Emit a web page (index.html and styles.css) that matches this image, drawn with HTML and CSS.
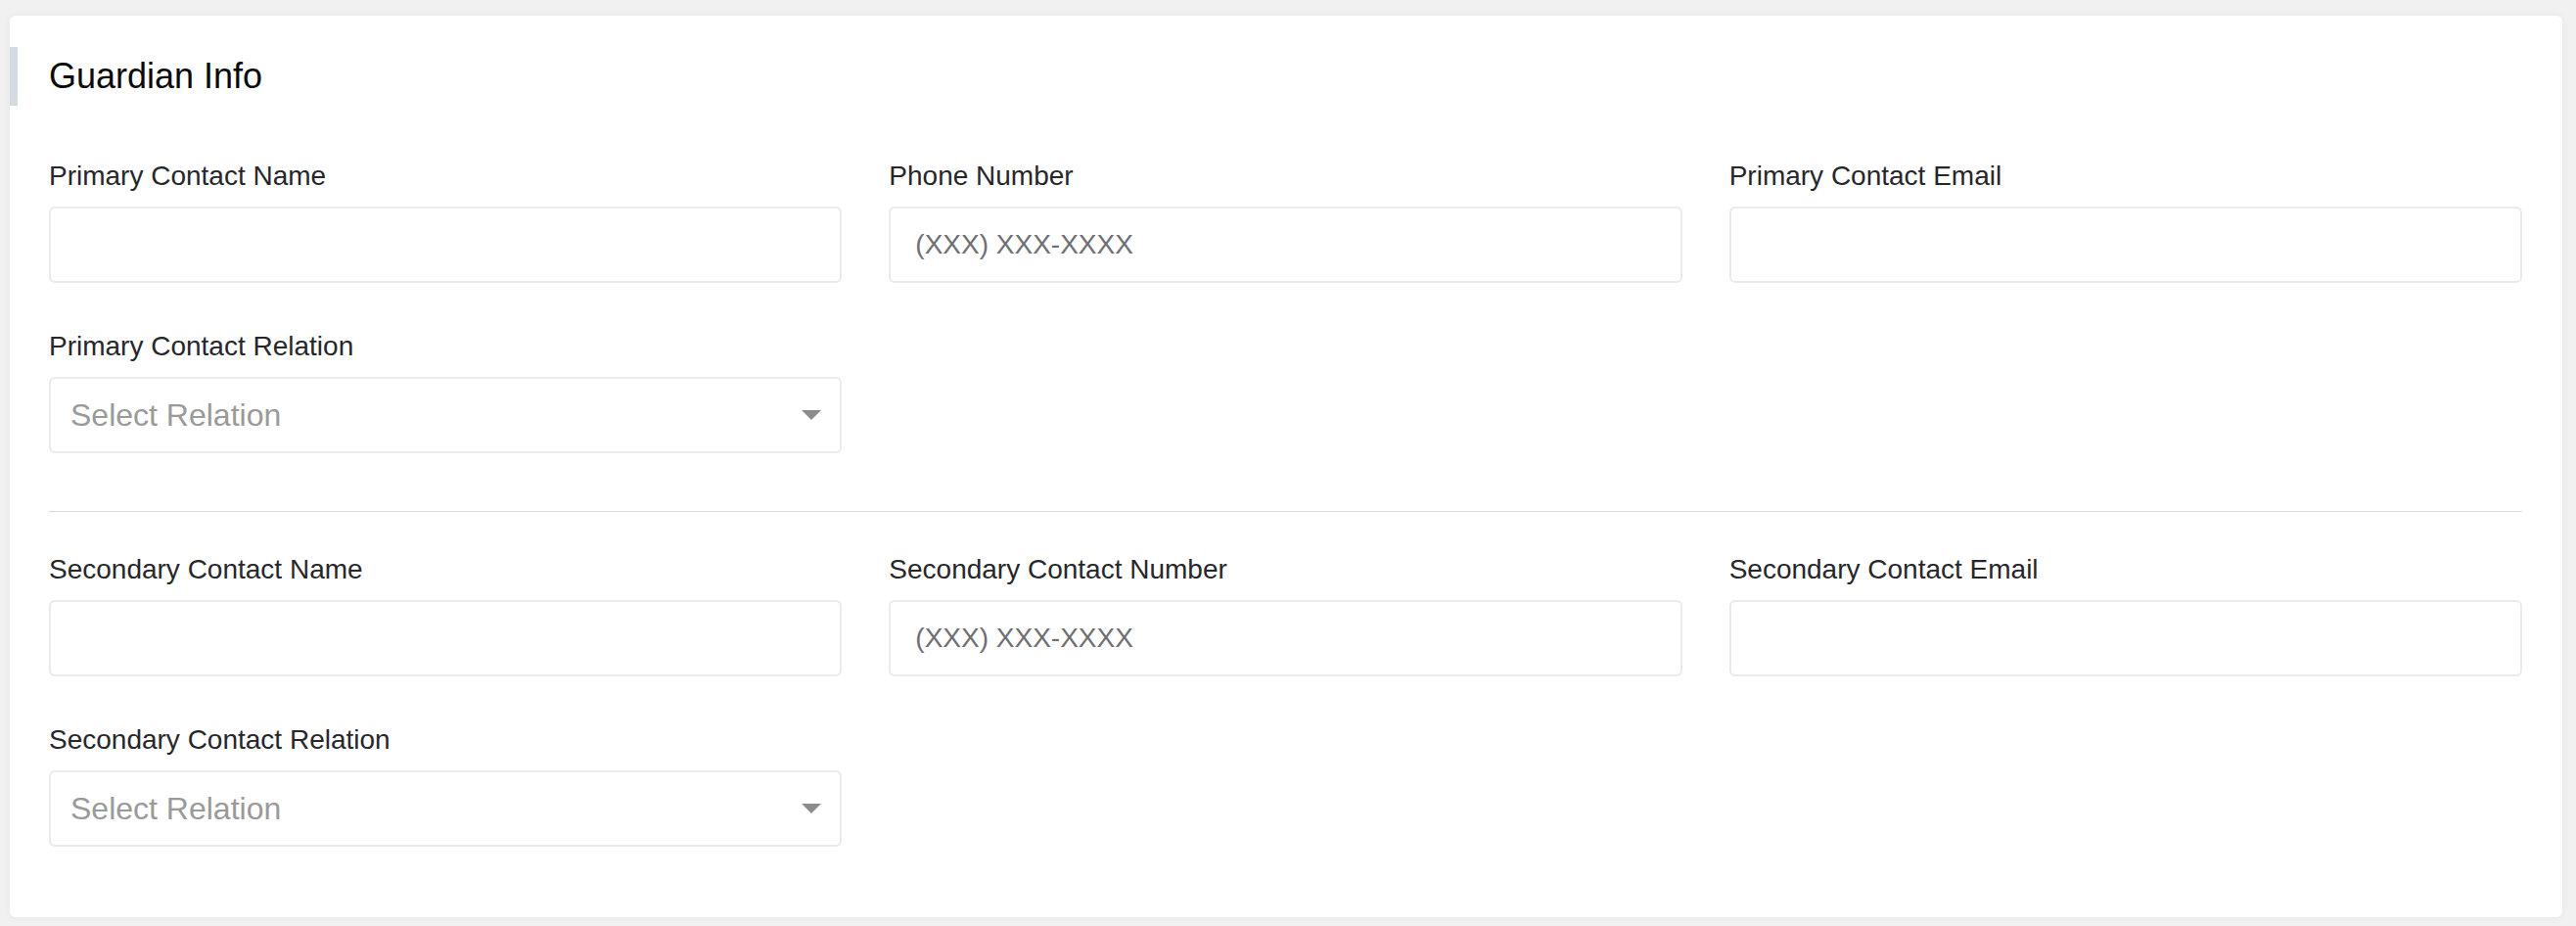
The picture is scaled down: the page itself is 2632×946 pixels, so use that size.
FILE: index.html
```html
<!DOCTYPE html>
<html lang="en">
<head>
<meta charset="utf-8">
<title>Guardian Info</title>
<link rel="stylesheet" href="styles.css">
</head>
<body>
<div class="card">
  <div class="card-header">
    <span class="accent"></span>
    <h2 class="title">Guardian Info</h2>
  </div>
  <div class="card-body">
    <div class="grid">
      <div class="field">
        <label class="label">Primary Contact Name</label>
        <input class="control" type="text">
      </div>
      <div class="field">
        <label class="label">Phone Number</label>
        <input class="control phone" type="text" placeholder="(XXX) XXX-XXXX">
      </div>
      <div class="field">
        <label class="label">Primary Contact Email</label>
        <input class="control" type="text">
      </div>
      <div class="field">
        <label class="label">Primary Contact Relation</label>
        <div class="control select">
          <span class="select-text">Select Relation</span>
          <svg class="caret" width="20" height="10" viewBox="0 0 20 10"><path d="M0 0H20L10 10Z" fill="#8c8c8c"/></svg>
        </div>
      </div>
    </div>
    <hr class="divider">
    <div class="grid">
      <div class="field">
        <label class="label">Secondary Contact Name</label>
        <input class="control" type="text">
      </div>
      <div class="field">
        <label class="label">Secondary Contact Number</label>
        <input class="control phone" type="text" placeholder="(XXX) XXX-XXXX">
      </div>
      <div class="field">
        <label class="label">Secondary Contact Email</label>
        <input class="control" type="text">
      </div>
      <div class="field">
        <label class="label">Secondary Contact Relation</label>
        <div class="control select">
          <span class="select-text">Select Relation</span>
          <svg class="caret" width="20" height="10" viewBox="0 0 20 10"><path d="M0 0H20L10 10Z" fill="#8c8c8c"/></svg>
        </div>
      </div>
    </div>
  </div>
</div>
</body>
</html>
```
FILE: styles.css
```css
html, body {
  margin: 0;
  padding: 0;
}
body {
  background: #f1f1f1;
  padding: 16px 14px 9px 10px;
  font-family: "Liberation Sans", Arial, Helvetica, sans-serif;
  box-sizing: border-box;
}
.card {
  background: #ffffff;
  border-radius: 6px;
  box-shadow: 0 0 8px rgba(0, 0, 0, 0.05);
  padding-top: 32px;
}
.card-header {
  display: flex;
  align-items: flex-start;
  height: 60px;
}
.accent {
  width: 8px;
  height: 60px;
  background: #d3dae1;
  flex: none;
}
.title {
  margin: 0 0 0 32px;
  font-size: 36px;
  line-height: 60px;
  font-weight: 400;
  color: #0a0a0a;
}
.card-body {
  padding: 52px 41px 72px 40px;
}
.grid {
  display: grid;
  grid-template-columns: repeat(3, 1fr);
  column-gap: 48px;
  row-gap: 45px;
}
.field {
  display: flex;
  flex-direction: column;
}
.label {
  font-size: 28px;
  line-height: 40px;
  color: #27272b;
  margin-bottom: 11px;
}
.control {
  box-sizing: border-box;
  height: 78px;
  width: 100%;
  border: 2px solid #ebebeb;
  border-radius: 6px;
  background: #fff;
  margin: 0;
  font-family: "Liberation Sans", Arial, Helvetica, sans-serif;
  outline: none;
}
.phone {
  padding: 0 20px 0 25px;
  font-size: 28px;
  color: #333;
}
.phone::placeholder {
  color: #6f6f74;
  opacity: 1;
}
.select {
  display: flex;
  align-items: center;
  justify-content: space-between;
  padding: 0 19px 0 20px;
}
.select-text {
  font-size: 32px;
  color: #9a9a9a;
}
.caret {
  display: block;
  flex: none;
}
.divider {
  border: 0;
  height: 1px;
  background: #d3dbe2;
  margin: 59px 0 39px 0;
}
```
